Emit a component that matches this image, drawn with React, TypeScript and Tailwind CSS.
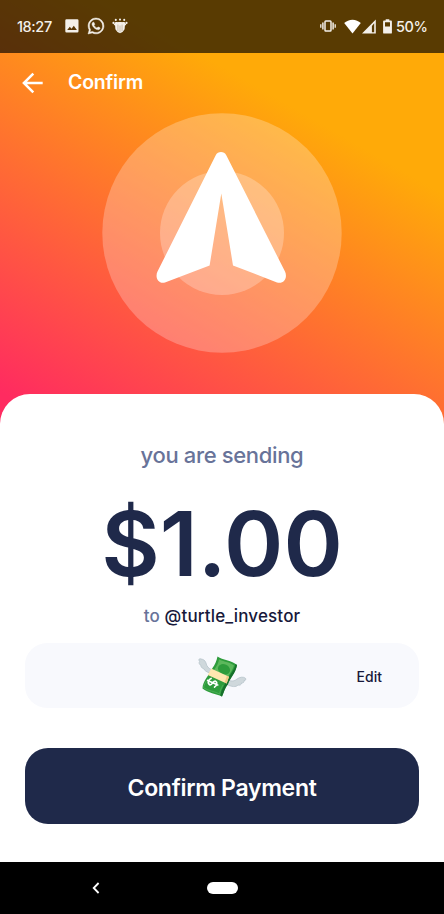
import type { ReactNode } from 'react';

interface PaymentProps {
  amount: string;
  recipient: string;
}

function StatusBar() {
  return (
    <div className="flex h-[52.5px] items-center justify-between bg-black/65 pl-[17px] pr-[17px] text-[#f4f0ea]">
      <div className="flex h-full items-center">
        <span className="w-[48px] whitespace-nowrap pt-px text-[14.5px] font-medium tracking-[-0.4px]">18:27</span>
        {/* Image notification */}
        <svg width="14" height="14" viewBox="0 0 14 14" className="mr-[9px] block">
          <path
            fill="currentColor"
            fillRule="evenodd"
            d="M1.5 0.3h10.8a1.2 1.2 0 0 1 1.2 1.2v10.8a1.2 1.2 0 0 1-1.2 1.2H1.5a1.2 1.2 0 0 1-1.2-1.2V1.5A1.2 1.2 0 0 1 1.5 .3zM2.2 11h9.7L8.8 6.8 6.5 9.8 4.8 7.8z"
          />
        </svg>
        {/* WhatsApp */}
        <svg width="16" height="16" viewBox="0 0 24 24" className="mr-2 block overflow-visible">
          <path
            fill="currentColor"
            stroke="currentColor"
            strokeWidth="0.7"
            d="M17.472 14.382c-.297-.149-1.758-.867-2.03-.967-.273-.099-.471-.148-.67.15-.197.297-.767.966-.94 1.164-.173.199-.347.223-.644.075-.297-.15-1.255-.463-2.39-1.475-.883-.788-1.48-1.761-1.653-2.059-.173-.297-.018-.458.13-.606.134-.133.298-.347.446-.52.149-.174.198-.298.298-.497.099-.198.05-.371-.025-.52-.075-.149-.669-1.612-.916-2.207-.242-.579-.487-.5-.669-.51-.173-.008-.371-.01-.57-.01-.198 0-.52.074-.792.372-.272.297-1.04 1.016-1.04 2.479 0 1.462 1.065 2.875 1.213 3.074.149.198 2.096 3.2 5.077 4.487.709.306 1.262.489 1.694.625.712.227 1.36.195 1.871.118.571-.085 1.758-.719 2.006-1.413.248-.694.248-1.289.173-1.413-.074-.124-.272-.198-.57-.347m-5.421 7.403h-.004a9.87 9.87 0 01-5.031-1.378l-.361-.214-3.741.982.998-3.648-.235-.374a9.86 9.86 0 01-1.51-5.26c.001-5.45 4.436-9.884 9.888-9.884 2.64 0 5.122 1.03 6.988 2.898a9.825 9.825 0 012.893 6.994c-.003 5.45-4.437 9.884-9.885 9.884m8.413-18.297A11.815 11.815 0 0012.05 0C5.495 0 .16 5.335.157 11.892c0 2.096.547 4.142 1.588 5.945L.057 24l6.305-1.654a11.882 11.882 0 005.683 1.448h.005c6.554 0 11.89-5.335 11.893-11.893a11.821 11.821 0 00-3.48-8.413z"
          />
        </svg>
        {/* Crest */}
        <svg width="16" height="16" viewBox="0 0 17 17" className="block">
          <g fill="currentColor">
            <circle cx="4" cy="2" r="1.1" />
            <circle cx="8.5" cy="1.7" r="1.1" />
            <circle cx="13" cy="2" r="1.1" />
            <circle cx="1.6" cy="5.3" r="1.2" />
            <circle cx="15.4" cy="5.3" r="1.2" />
            <path d="M3.8 4.2 13.2 4.2 15.2 7 13.7 8.2 13.4 12 11.2 14.8 8.5 16.2 5.8 14.8 3.6 12 3.3 8.2 1.8 7z" />
          </g>
          <path d="M6.3 7v7M8.5 8v7.5M10.7 7v7" stroke="#a8967a" strokeWidth="0.6" />
          <path d="M6.2 2.5v2M10.8 2.5v2" stroke="#5c4002" strokeWidth="0.6" />
        </svg>
      </div>

      <div className="flex items-center">
        {/* Vibrate */}
        <svg width="16" height="14" viewBox="0 0 16 14" className="mr-[8px] block" fill="none" stroke="currentColor">
          <rect x="5" y="2" width="6" height="10" rx="0.8" strokeWidth="1.5" />
          <path d="M2.9 3.4v7.2M13.1 3.4v7.2" strokeWidth="1.5" />
          <path d="M0.8 5.2v3.6M15.2 5.2v3.6" strokeWidth="1.3" />
        </svg>
        {/* Wifi */}
        <svg width="17" height="15" viewBox="0 0 17 15" className="mr-px block">
          <path fill="#fff" d="M8.5 14.5.2 4.1C2.4 2 5.3.7 8.5.7s6.100 1.300 8.300 3.400z" />
        </svg>
        {/* Mobile signal */}
        <svg width="14" height="15" viewBox="0 0 14 15" className="mr-[7px] block">
          <path fill="currentColor" fillRule="evenodd" d="M0 14.600 13.800.500V14.600zM9.900 13.200h2.300V4.300L9.900 6.900z" />
        </svg>
        {/* Battery */}
        <svg width="9" height="15" viewBox="0 0 9 15" className="mr-[4px] block">
          <path
            fill="currentColor"
            fillRule="evenodd"
            d="M2.700.300h3.600v1.300h1.700a.9.9 0 0 1 .9.9v11.200a.9.9 0 0 1-.9.9H1a.9.9 0 0 1-.9-.9V2.500a.9.900 0 0 1 .9-.9h1.700zM2 3.300v4.300h5V3.300z"
          />
        </svg>
        <span className="w-[31px] whitespace-nowrap pt-px text-[14.5px] font-medium tracking-[-0.4px]">50%</span>
      </div>
    </div>
  );
}

function SendBadge() {
  return (
    <svg width="240" height="240" viewBox="102 113 240 240" className="mx-auto block">
      <circle cx="222" cy="233" r="119.700" fill="#fff" fillOpacity="0.25" />
      <circle cx="222" cy="233" r="62" fill="#fff" fillOpacity="0.25" />
      <path
        fill="#fff"
        d="M215.600 155.400C218 151 224 151 226.400 155.400L285 271.600C288 278 283.500 284.400 277 282.400L233 265.500 221.300 193.500 209.600 265.500 165 282.400C159 284.400 154.500 278 157.500 271.600Z"
      />
    </svg>
  );
}

function FlyingMoney() {
  return (
    <svg width="49" height="42" viewBox="0 0 49 42" className="relative top-px block">
      {/* Wings */}
      <g fill="#cfd8dc" stroke="#b0bec5" strokeWidth="0.7" strokeLinejoin="round">
        <path d="M12 17C8.500 16 6.500 14.500 5.500 12.500 3.500 12 2.800 10.800 3 9.500 1 8.500.7 6.500 1.600 5.500 0 3.500 1.500 2 3 3 5 3.200 7.200 4.200 8 7 8.500 10 10.500 12.500 13.800 13.800z" />
        <path d="M29 24C33 25 36 25.800 39 23 42 20.800 45.500 20.600 47.400 22.200 48.600 23.200 47.500 24.600 46 24.600 46.500 26.300 45 27.200 43.500 27 43.500 28.800 41.800 29.600 40 29 38 31.500 33.500 30.800 29 28.600z" />
      </g>
      {/* Notes */}
      <path d="M19.500.500C25 4.500 32.500 3.500 39 9 37.500 17 31.500 22 30 28 26.500 32 26 36 24 40.500 18 38 10 37 4.500 32.500 4.500 25 12 18 14.500 12 17 9 18.500 5 19.500.500z" fill="#2e9c3c" />
      <path d="M39 9C38 17 32 22 30 28 27 32 26 36 24 40.500L22.500 39.700C23 34 26.500 29 29 24.500 31 19 36.500 15 37.500 8z" fill="#16702b" />
      <path d="M21 3.300C26 6 31 5.600 36 9.600 34 16 31 18 29.500 22L16 14C19 10 20.500 7 21 3.300z" fill="#5cb85c" />
      <ellipse cx="26" cy="13.300" rx="6.300" ry="5" transform="rotate(25 26 13.300)" fill="#2e9c3c" />
      <path d="M9.500 23.500C7 27 6 29 5.500 31.800 11 35 17 35.500 21.700 38 22 34 23.500 32 25 29" fill="none" stroke="#50b35a" strokeWidth="0.8" />
      {/* Band */}
      <path d="M13.200 12.600 31 20.700 28.600 27.500 9.800 19z" fill="#ffe7b0" />
      <path d="m31 20.700-2.400 6.800-2-.9 2.400-6.800z" fill="#efcb84" />
      {/* Dollar mark */}
      <g transform="translate(14.700 26.700) rotate(114)" fill="none" stroke="#fff" strokeWidth="1.700" strokeLinecap="round">
        <path d="M3.200-3.500C1.500-5-2.500-4.500-2.600-2-2.800.600 3.200-.800 3 2 2.800 5-1.500 5-3.200 3.200M0-5.500V5.500" />
      </g>
    </svg>
  );
}

function Card({ children }: { children: ReactNode }) {
  return (
    <section className="flex h-[468px] flex-col items-center rounded-t-[30px] bg-white px-[25px]">
      {children}
    </section>
  );
}

function NavigationBar() {
  return (
    <div className="grid h-[52px] grid-cols-[192px_60px_192px] items-center bg-black">
      <button className="flex justify-center" aria-label="Back">
        <svg width="8" height="12" viewBox="0 0 8 12" className="block">
          <path d="M6.600 1 1.700 6l4.900 5" fill="none" stroke="#fff" strokeWidth="1.800" />
        </svg>
      </button>
      <button className="flex justify-center" aria-label="Home">
        <span className="h-3 w-[31px] rounded-full bg-white" />
      </button>
    </div>
  );
}

function ConfirmPayment({ amount, recipient }: PaymentProps) {
  return (
    <main className="h-[914px] w-[444px] overflow-hidden bg-black font-['Inter',sans-serif]">
      <div className="h-[862px] bg-[linear-gradient(30deg,#ff2b60_215px,#ffaa08_608px)] bg-[length:444px_640px] bg-no-repeat">
        <StatusBar />

        <header className="flex h-[60.5px] items-center pl-[22px] text-white">
          <button aria-label="Go back">
            <svg width="22" height="22" viewBox="0 0 22 22" className="block">
              <path d="M20.700 11H2M11.300 1.600 1.900 11l9.400 9.400" fill="none" stroke="currentColor" strokeWidth="2.500" />
            </svg>
          </button>
          <h1 className="ml-6 text-[19.5px] font-semibold tracking-[-0.2px]">Confirm</h1>
        </header>

        <div className="h-[281px]">
          <SendBadge />
        </div>

        <Card>
          <p className="mt-[45px] text-[22px] leading-8 font-medium tracking-[-0.35px] text-[#687399]">you are sending</p>
          <p className="mt-[22px] h-[100px] whitespace-nowrap text-[90px] leading-[102px] font-[570] text-[#1f294a]">
            {amount}
          </p>
          <p className="mt-[11px] text-[17px] leading-6 font-medium tracking-[0.15px] text-[#17183a]">
            <span className="text-[#687399]">to</span> {recipient}
          </p>

          <div className="mt-[15px] grid h-[65px] w-full shrink-0 grid-cols-[1fr_49px_1fr] items-center rounded-[22px] bg-[#f8f9fd]">
            <div className="col-start-2">
              <FlyingMoney />
            </div>
            <button className="mr-[37px] justify-self-end pt-0.5 text-[14px] font-medium text-[#17183a]">Edit</button>
          </div>

          <button className="mt-10 h-[76px] w-full shrink-0 rounded-[23px] bg-[#1f294a] pt-1 text-[23px] font-[570] tracking-[-0.3px] text-white">
            Confirm Payment
          </button>
        </Card>
      </div>
      <NavigationBar />
    </main>
  );
}

export default function App() {
  return <ConfirmPayment amount="$1.00" recipient="@turtle_investor" />;
}
